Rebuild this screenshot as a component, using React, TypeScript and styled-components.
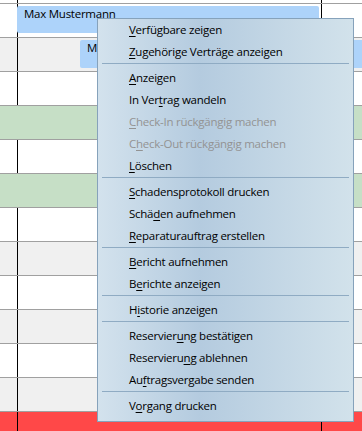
import styled, { createGlobalStyle, css } from "styled-components";

const GlobalStyle = createGlobalStyle`
  html, body {
    margin: 0;
    padding: 0;
    background: #ffffff;
  }
  body {
    font-family: "Open Sans", "Noto Sans", sans-serif;
  }
`;

type Tone = "white" | "gray" | "green" | "red";

const rows: Tone[] = [
  "white",
  "gray",
  "white",
  "green",
  "white",
  "green",
  "white",
  "gray",
  "white",
  "gray",
  "white",
  "gray",
  "red",
];

type Entry = { label: string; key: number; disabled?: boolean } | "sep";

const entries: Entry[] = [
  { label: "Verfügbare zeigen", key: 0 },
  { label: "Zugehörige Verträge anzeigen", key: 0 },
  "sep",
  { label: "Anzeigen", key: 0 },
  { label: "In Vertrag wandeln", key: 6 },
  { label: "Check-In rückgängig machen", key: 0, disabled: true },
  { label: "Check-Out rückgängig machen", key: 1, disabled: true },
  { label: "Löschen", key: 0 },
  "sep",
  { label: "Schadensprotokoll drucken", key: 0 },
  { label: "Schäden aufnehmen", key: 4 },
  { label: "Reparaturauftrag erstellen", key: 0 },
  "sep",
  { label: "Bericht aufnehmen", key: 0 },
  { label: "Berichte anzeigen", key: 1 },
  "sep",
  { label: "Historie anzeigen", key: 1 },
  "sep",
  { label: "Reservierung bestätigen", key: 9 },
  { label: "Reservierung ablehnen", key: 10 },
  { label: "Auftragsvergabe senden", key: 2 },
  "sep",
  { label: "Vorgang drucken", key: 1 },
];

export default function App() {
  return (
    <>
      <GlobalStyle />
      <Page>
        <Schedule>
          <TopStrip />
          {rows.map((tone, i) => (
            <Row key={i} $tone={tone}>
              {i === 0 && (
                <Booking $start={17} $width={302} $height={27}>
                  Max Mustermann
                </Booking>
              )}
              {i === 1 && (
                <Booking $start={80} $width={320} $height={28}>
                  Max Mustermann
                </Booking>
              )}
            </Row>
          ))}
        </Schedule>

        <Menu>
          {entries.map((e, i) =>
            e === "sep" ? (
              <Separator key={i} />
            ) : (
              <Item key={i} $disabled={!!e.disabled}>
                {e.label.slice(0, e.key)}
                <Mnemonic>{e.label.charAt(e.key)}</Mnemonic>
                {e.label.slice(e.key + 1)}
              </Item>
            )
          )}
        </Menu>
      </Page>
    </>
  );
}

const toneColors: Record<Tone, string> = {
  white: "#ffffff",
  gray: "#f0f0f0",
  green: "#c6dfc6",
  red: "#ff4848",
};

// the two black column lines of the planner
const gridLines = css`
  background-image: linear-gradient(#000, #000), linear-gradient(#000, #000);
  background-size: 1px 100%;
  background-position: 17px 0, 321px 0;
  background-repeat: no-repeat;
`;

// Segoe UI 9pt stand-in
const uiText = css`
  font-size: 11.5px;
  letter-spacing: -0.25px;
`;

const Page = styled.div`
  position: relative;
  width: 362px;
  height: 431px;
  overflow: hidden;
  background: #ffffff;
`;

const Schedule = styled.div`
  display: flex;
  flex-direction: column;
  height: 100%;
`;

const TopStrip = styled.div`
  flex: none;
  height: 3px;
  border-bottom: 1px solid #a0a0a0;
  background-color: #ffffff;
  ${gridLines}
`;

const Row = styled.div<{ $tone: Tone }>`
  flex: none;
  height: 33px;
  display: flex;
  align-items: flex-start;
  overflow: hidden;
  border-bottom: 1px solid #a0a0a0;
  background-color: ${({ $tone }) => toneColors[$tone]};
  ${({ $tone }) => $tone !== "green" && gridLines}

  &:last-child {
    border-bottom: none;
  }
`;

const Booking = styled.div<{ $start: number; $width: number; $height: number }>`
  flex: none;
  box-sizing: border-box;
  margin: 2px 0 0 ${({ $start }) => $start}px;
  width: ${({ $width }) => $width}px;
  height: ${({ $height }) => $height}px;
  padding: 1px 7px 0;
  background: #add3fa;
  border-radius: 2px;
  ${uiText}
  line-height: 14px;
  color: #000;
  white-space: nowrap;
`;

const Menu = styled.div`
  position: absolute;
  left: 97px;
  top: 18px;
  width: 257px;
  box-sizing: border-box;
  display: flex;
  flex-direction: column;
  padding: 0 0 4px;
  border: 1px solid #86a2bb;
  background: linear-gradient(
    to right,
    #d3e2ed 0%,
    #b4cbdf 40%,
    #d2e2eb 100%
  );
`;

const Item = styled.div<{ $disabled: boolean }>`
  height: 22px;
  line-height: 22px;
  padding-left: 31px;
  ${uiText}
  white-space: nowrap;
  color: ${({ $disabled }) => ($disabled ? "#939393" : "#000000")};
`;

const Mnemonic = styled.span`
  text-decoration: underline;
  text-underline-offset: 2px;
`;

const Separator = styled.div`
  height: 3px;
  margin: 0 4px 0 4px;
  border-top: 1px solid #8fabc3;
`;
